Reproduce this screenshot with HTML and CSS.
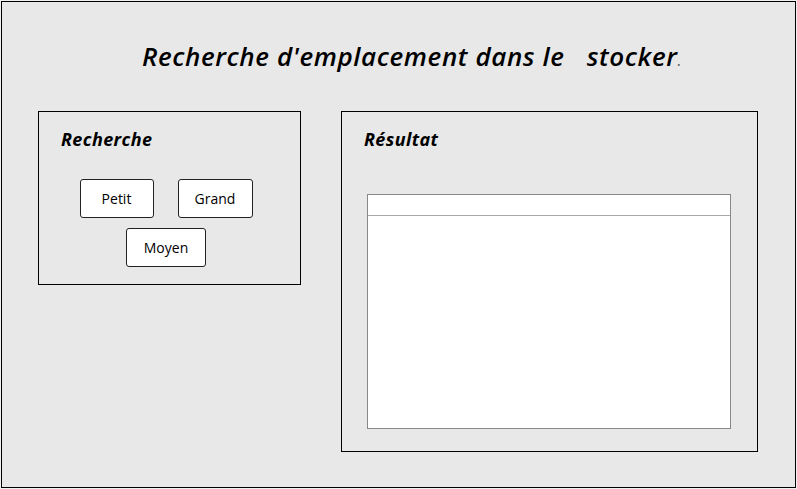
FILE: index.html
```html
<!DOCTYPE html>
<html>
<head>
<meta charset="utf-8">
<link rel="stylesheet" href="styles.css">
</head>
<body>
<div class="frame">
  <h1 class="title">Recherche d'emplacement dans le&nbsp;&nbsp; stocker<span class="dot">.</span></h1>
  <div class="panels">
    <section class="panel panel-search">
      <h2 class="panel-title">Recherche</h2>
      <div class="buttons">
        <button class="btn btn-petit">Petit</button>
        <button class="btn btn-grand">Grand</button>
        <button class="btn btn-moyen">Moyen</button>
      </div>
    </section>
    <section class="panel panel-result">
      <h2 class="panel-title">Résultat</h2>
      <div class="table">
        <div class="table-head"></div>
        <div class="table-body"></div>
      </div>
    </section>
  </div>
</div>
</body>
</html>
```
FILE: styles.css
```css
html, body {
  margin: 0;
  padding: 0;
  background: #f0f0f0;
}
body {
  width: 797px;
  height: 489px;
  overflow: hidden;
  font-family: "Open Sans", "Noto Sans", sans-serif;
}
.frame {
  box-sizing: border-box;
  margin: 1px 0 0 1px;
  width: 795px;
  height: 487px;
  border: 1px solid #000;
  background: #e8e8e8;
}
.title {
  margin: 0;
  padding: 37px 0 0 140px;
  height: 72px;
  box-sizing: border-box;
  font-size: 26px;
  font-weight: 600;
  font-style: italic;
  line-height: 34px;
  color: #000;
  letter-spacing: 0.6px;
}
.title .dot {
  font-size: 16px;
  color: #555;
  font-weight: 400;
}
.panels {
  display: flex;
  align-items: flex-start;
  gap: 40px;
  margin: 37px 0 0 36px;
}
.panel {
  box-sizing: border-box;
  border: 1px solid #000;
  background: #e8e8e8;
}
.panel-search {
  width: 263px;
  height: 174px;
  padding: 15px 0 0 22px;
}
.panel-result {
  width: 417px;
  height: 341px;
  padding: 15px 0 0 22px;
}
.panel-title {
  margin: 0;
  font-size: 18px;
  font-weight: 700;
  font-style: italic;
  line-height: 24px;
  color: #000;
  letter-spacing: 0.4px;
}
.buttons {
  display: flex;
  flex-wrap: wrap;
  justify-content: center;
  column-gap: 24px;
  row-gap: 10px;
  width: 210px;
  margin: 28px 0 0 0;
}
.btn {
  box-sizing: border-box;
  height: 39px;
  background: #fff;
  border: 1px solid #222;
  border-radius: 3px;
  font-family: "Open Sans", "Noto Sans", sans-serif;
  font-size: 14px;
  color: #000;
  padding: 0;
  line-height: 37px;
}
.btn-petit { width: 74px; }
.btn-grand { width: 75px; }
.btn-moyen { width: 80px; }
.table {
  box-sizing: border-box;
  width: 364px;
  height: 235px;
  margin: 43px 0 0 3px;
  border: 1px solid #888;
  background: #fff;
}
.table-head {
  height: 20px;
  border-bottom: 1px solid #aaa;
}
```
